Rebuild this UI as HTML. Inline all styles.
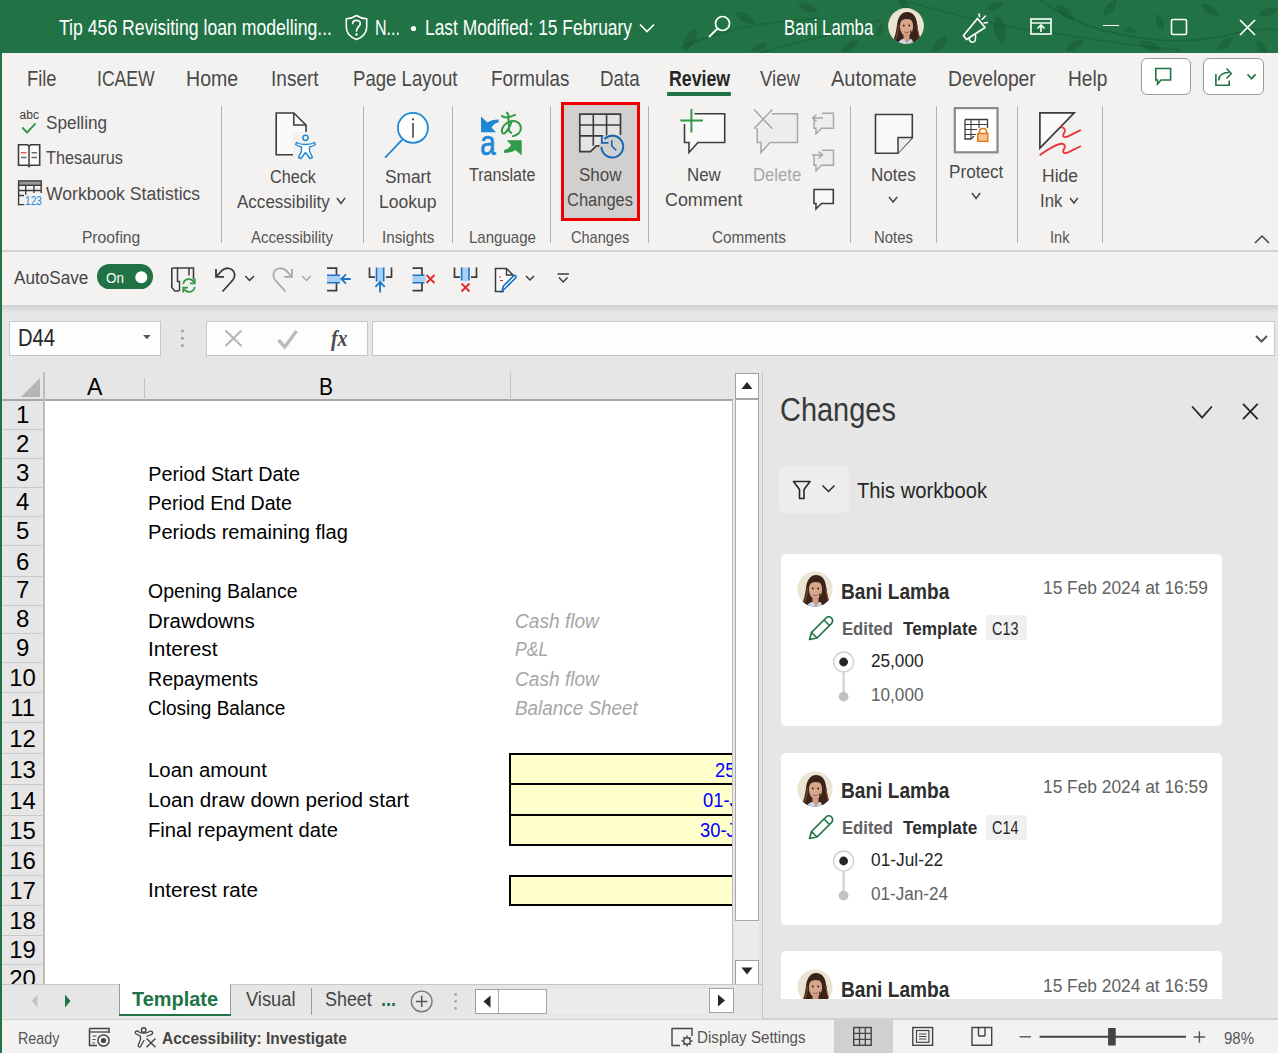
<!DOCTYPE html><html><head><meta charset="utf-8"><style>*{margin:0;padding:0;box-sizing:border-box}
html,body{width:1278px;height:1053px;overflow:hidden;background:#e6e6e6;font-family:"Liberation Sans", sans-serif}
.a{position:absolute;display:block}
.t{white-space:nowrap;transform-origin:0 0}
svg.a{overflow:visible}</style></head><body>
<div class="a" style="left:0px;top:0px;width:1278px;height:53px;background:#217346"></div>
<svg class="a" style="left:0px;top:0px;" width="1278" height="53" viewBox="0 0 1278 53" fill="none"><path d="M680 48 C720 30 760 22 820 18 M900 0 C940 10 990 25 1030 30 S1120 45 1180 50 M1040 0 C1070 20 1100 35 1160 40 S1240 25 1278 30 M760 53 C800 40 840 35 880 20" stroke="#16502f" stroke-width="1.6" fill="none" opacity="0.4"/><path d="M-13.0 0 Q0 -10 13.0 0 Q0 10 -13.0 0 Z" transform="translate(690 40) rotate(-60)" fill="#16502f" opacity="0.38"/><path d="M-11.0 0 Q0 -8 11.0 0 Q0 8 -11.0 0 Z" transform="translate(745 18) rotate(30)" fill="#16502f" opacity="0.38"/><path d="M-9.0 0 Q0 -7 9.0 0 Q0 7 -9.0 0 Z" transform="translate(760 47) rotate(-20)" fill="#16502f" opacity="0.38"/><path d="M-11.0 0 Q0 -8 11.0 0 Q0 8 -11.0 0 Z" transform="translate(808 8) rotate(20)" fill="#16502f" opacity="0.38"/><path d="M-10.0 0 Q0 -8 10.0 0 Q0 8 -10.0 0 Z" transform="translate(850 46) rotate(-35)" fill="#16502f" opacity="0.38"/><path d="M-10.0 0 Q0 -7 10.0 0 Q0 7 -10.0 0 Z" transform="translate(905 6) rotate(45)" fill="#16502f" opacity="0.38"/><path d="M-11.0 0 Q0 -9 11.0 0 Q0 9 -11.0 0 Z" transform="translate(940 44) rotate(-50)" fill="#16502f" opacity="0.38"/><path d="M-15.0 0 Q0 -12 15.0 0 Q0 12 -15.0 0 Z" transform="translate(1000 30) rotate(80)" fill="#16502f" opacity="0.38"/><path d="M-9.0 0 Q0 -7 9.0 0 Q0 7 -9.0 0 Z" transform="translate(995 6) rotate(-20)" fill="#16502f" opacity="0.38"/><path d="M-12.0 0 Q0 -9 12.0 0 Q0 9 -12.0 0 Z" transform="translate(1065 12) rotate(40)" fill="#16502f" opacity="0.38"/><path d="M-11.0 0 Q0 -8 11.0 0 Q0 8 -11.0 0 Z" transform="translate(1075 45) rotate(-30)" fill="#16502f" opacity="0.38"/><path d="M-10.0 0 Q0 -8 10.0 0 Q0 8 -10.0 0 Z" transform="translate(1110 8) rotate(-50)" fill="#16502f" opacity="0.38"/><path d="M-12.0 0 Q0 -9 12.0 0 Q0 9 -12.0 0 Z" transform="translate(1150 46) rotate(20)" fill="#16502f" opacity="0.38"/><path d="M-9.0 0 Q0 -7 9.0 0 Q0 7 -9.0 0 Z" transform="translate(1160 22) rotate(70)" fill="#16502f" opacity="0.38"/><path d="M-11.0 0 Q0 -8 11.0 0 Q0 8 -11.0 0 Z" transform="translate(1210 10) rotate(30)" fill="#16502f" opacity="0.38"/><path d="M-10.0 0 Q0 -8 10.0 0 Q0 8 -10.0 0 Z" transform="translate(1225 44) rotate(-40)" fill="#16502f" opacity="0.38"/><path d="M-11.0 0 Q0 -8 11.0 0 Q0 8 -11.0 0 Z" transform="translate(1268 12) rotate(-20)" fill="#16502f" opacity="0.38"/><path d="M-9.0 0 Q0 -7 9.0 0 Q0 7 -9.0 0 Z" transform="translate(1262 48) rotate(50)" fill="#16502f" opacity="0.38"/><path d="M-7.0 0 Q0 -6 7.0 0 Q0 6 -7.0 0 Z" transform="translate(790 30) rotate(60)" fill="#16502f" opacity="0.38"/><path d="M-7.0 0 Q0 -6 7.0 0 Q0 6 -7.0 0 Z" transform="translate(880 30) rotate(-70)" fill="#16502f" opacity="0.38"/><path d="M-7.0 0 Q0 -6 7.0 0 Q0 6 -7.0 0 Z" transform="translate(1130 30) rotate(10)" fill="#16502f" opacity="0.38"/></svg>
<div class="a" style="left:0px;top:53px;width:1278px;height:1000px;background:#217346"></div>
<div class="a" style="left:2px;top:53px;width:1276px;height:198px;background:#f3f2f1"></div>
<div class="a" style="left:2px;top:250px;width:1276px;height:2px;background:#d4d2d0"></div>
<div class="a" style="left:2px;top:252px;width:1276px;height:53px;background:#f3f2f1"></div>
<div class="a" style="left:2px;top:305px;width:1276px;height:713px;background:#e6e6e6"></div>
<div class="a" style="left:2px;top:305px;width:1276px;height:8px;background:linear-gradient(#cfcfcf,#e6e6e6)"></div>
<div class="a" style="left:9px;top:321px;width:152px;height:35px;background:#fdfdfd;border:1px solid #c6c6c6"></div>
<div class="a" style="left:206px;top:321px;width:162px;height:35px;background:#fdfdfd;border:1px solid #c6c6c6"></div>
<div class="a" style="left:372px;top:321px;width:903px;height:35px;background:#fdfdfd;border:1px solid #c6c6c6"></div>
<div class="a" style="left:44px;top:400px;width:688px;height:584px;background:#fff"></div>
<div class="a" style="left:2px;top:399px;width:731px;height:2px;background:#a6a6a6"></div>
<div class="a" style="left:43px;top:372px;width:1.5px;height:612px;background:#bdbdbd"></div>
<div class="a" style="left:144px;top:378px;width:1px;height:22px;background:#c4c4c4"></div>
<div class="a" style="left:510px;top:372px;width:1px;height:28px;background:#c4c4c4"></div>
<svg class="a" style="left:20px;top:376px;" width="22" height="22" viewBox="0 0 22 22" fill="none"><path d="M20 2 L20 21 L1 21 Z" fill="#b4b4b4"/></svg>
<div class="a" style="left:2px;top:429px;width:42px;height:1px;background:#c8c8c8"></div>
<div class="a" style="left:2px;top:458px;width:42px;height:1px;background:#c8c8c8"></div>
<div class="a" style="left:2px;top:487px;width:42px;height:1px;background:#c8c8c8"></div>
<div class="a" style="left:2px;top:516px;width:42px;height:1px;background:#c8c8c8"></div>
<div class="a" style="left:2px;top:545px;width:42px;height:1px;background:#c8c8c8"></div>
<div class="a" style="left:2px;top:576px;width:42px;height:1px;background:#c8c8c8"></div>
<div class="a" style="left:2px;top:605px;width:42px;height:1px;background:#c8c8c8"></div>
<div class="a" style="left:2px;top:633px;width:42px;height:1px;background:#c8c8c8"></div>
<div class="a" style="left:2px;top:662px;width:42px;height:1px;background:#c8c8c8"></div>
<div class="a" style="left:2px;top:692px;width:42px;height:1px;background:#c8c8c8"></div>
<div class="a" style="left:2px;top:722px;width:42px;height:1px;background:#c8c8c8"></div>
<div class="a" style="left:2px;top:753px;width:42px;height:1px;background:#c8c8c8"></div>
<div class="a" style="left:2px;top:784px;width:42px;height:1px;background:#c8c8c8"></div>
<div class="a" style="left:2px;top:815px;width:42px;height:1px;background:#c8c8c8"></div>
<div class="a" style="left:2px;top:845px;width:42px;height:1px;background:#c8c8c8"></div>
<div class="a" style="left:2px;top:875px;width:42px;height:1px;background:#c8c8c8"></div>
<div class="a" style="left:2px;top:905px;width:42px;height:1px;background:#c8c8c8"></div>
<div class="a" style="left:2px;top:935px;width:42px;height:1px;background:#c8c8c8"></div>
<div class="a" style="left:2px;top:964px;width:42px;height:1px;background:#c8c8c8"></div>
<div class="a" style="left:762px;top:372px;width:1px;height:646px;background:#c6c6c6"></div>
<div class="a" style="left:2px;top:984px;width:760px;height:35px;background:#e6e6e6"></div>
<div class="a" style="left:2px;top:984px;width:760px;height:1px;background:#c6c6c6"></div>
<div class="a" style="left:2px;top:1019px;width:1276px;height:34px;background:#f3f2f1"></div>
<div class="a" style="left:2px;top:1018px;width:1276px;height:1.5px;background:#d2d2d2"></div>
<span class="a t" style="left:58.80px;top:16px;font-size:21.22px;line-height:23px;color:#ffffff;transform:scaleX(0.8315);">Tip 456 Revisiting loan modelling...</span>
<span class="a t" style="left:375.00px;top:16px;font-size:21.22px;line-height:23px;color:#ffffff;transform:scaleX(0.7576);">N...</span>
<svg class="a" style="left:410px;top:25px;" width="7" height="7" viewBox="0 0 7 7" fill="none"><circle cx="3.5" cy="3.5" r="2.6" fill="#fff"/></svg>
<span class="a t" style="left:424.80px;top:16px;font-size:21.22px;line-height:23px;color:#ffffff;transform:scaleX(0.8201);">Last Modified: 15 February</span>
<svg class="a" style="left:344px;top:13px;" width="26" height="28" viewBox="0 0 26 28" fill="none"><path d="M12.5 2.5 C9 4.8 5.5 5.8 2.3 5.8 V14 C2.3 20 6 24 12.5 26.5 C19 24 22.7 20 22.7 14 V5.8 C19.5 5.8 16 4.8 12.5 2.5 Z" stroke="#fff" stroke-width="1.6" stroke-linejoin="round"/><path d="M8.7 10.5 C8.7 6.3 16.3 6.3 16.3 10.5 C16.3 13.5 12.5 14 12.5 18" stroke="#fff" stroke-width="1.7" stroke-linecap="round" fill="none"/><circle cx="12.5" cy="21.5" r="1.2" fill="#fff"/></svg>
<svg class="a" style="left:638px;top:21px;" width="18" height="14" viewBox="0 0 18 14" fill="none"><path d="M2 3.5 L9 10.5 L16 3.5" stroke="#fff" stroke-width="1.7"/></svg>
<svg class="a" style="left:707px;top:14px;" width="26" height="25" viewBox="0 0 26 25" fill="none"><circle cx="15.5" cy="9.5" r="7" stroke="#fff" stroke-width="1.7"/><path d="M10.5 14.5 L2.5 22.5" stroke="#fff" stroke-width="1.8" stroke-linecap="round"/></svg>
<span class="a t" style="left:784.30px;top:16px;font-size:21.22px;line-height:23px;color:#ffffff;transform:scaleX(0.7876);">Bani Lamba</span>
<svg class="a" style="left:955px;top:10px;" width="40" height="35" viewBox="0 0 40 35" fill="none"><path d="M8.5 25.5 L22.5 8.5 L30 17.5 L11.5 29.5 Z" stroke="#fff" stroke-width="1.7" stroke-linejoin="round" fill="none"/><path d="M14.5 27.8 C13.5 31 17 33.5 19.5 31.5 C20.5 30.5 20.8 29 20.5 24.5" stroke="#fff" stroke-width="1.5" fill="none"/><path d="M24.5 6.5 L24 4 M27 9.5 L30.5 6 M29 13 L32.5 12.5" stroke="#fff" stroke-width="1.6" stroke-linecap="round"/></svg>
<svg class="a" style="left:1029px;top:16px;" width="24" height="20" viewBox="0 0 24 20" fill="none"><rect x="2" y="3" width="20" height="15" stroke="#fff" stroke-width="1.6"/><path d="M2 7 H22" stroke="#fff" stroke-width="1.4"/><path d="M12 16 V9.5 M8.5 12.5 L12 9 L15.5 12.5" stroke="#fff" stroke-width="1.6"/></svg>
<div class="a" style="left:1102.5px;top:24.5px;width:16px;height:1.6px;background:#fff"></div>
<svg class="a" style="left:1170px;top:18px;" width="18" height="18" viewBox="0 0 18 18" fill="none"><rect x="1.5" y="1.5" width="15" height="15" rx="1.5" stroke="#fff" stroke-width="1.6"/></svg>
<svg class="a" style="left:1238px;top:18px;" width="19" height="19" viewBox="0 0 19 19" fill="none"><path d="M2 2 L17 17 M17 2 L2 17" stroke="#fff" stroke-width="1.7"/></svg>
<svg class="a" style="left:888px;top:8px;" width="36" height="36" viewBox="0 0 36 36" fill="none"><defs><clipPath id="av0"><circle cx="18" cy="18" r="17.9"/></clipPath></defs>
<g clip-path="url(#av0)"><rect width="36" height="36" fill="#ece4d2"/>
<path d="M4 34 C7 30 8 24 9 17 C10 8 14 4 19 4 C25 4 28 8 29 15 C30 23 31 30 34 35 L34 40 H4 Z" fill="#3a231a"/>
<path d="M7 33 C9 28 10 22 10.5 17 M29 17 C29.5 24 31 29 33 33" stroke="#7a4a2a" stroke-width="1.2" fill="none"/>
<ellipse cx="18.5" cy="18.5" rx="6.6" ry="9.6" fill="#d7a589"/>
<path d="M12 14 C13 8 17 6.5 20 7 C23 8 24.5 10 25 13 C22 10.5 15 10 12 14 Z" fill="#3a231a"/>
<rect x="15.5" y="26" width="6" height="10" fill="#cf9c80"/>
<path d="M9 40 C10 33 13 31 16 31 L19 36 L22 31 C25 31 27 33 28 40 Z" fill="#c9dced"/>
<path d="M23 22 C25 28 26 33 30 36 L26 36 C24 32 22.5 28 22 23 Z" fill="#3a231a"/>
<circle cx="15.8" cy="17.5" r="0.9" fill="#2a1a14"/><circle cx="21.2" cy="17.5" r="0.9" fill="#2a1a14"/>
<path d="M15.8 23.5 C17.5 25 19.5 25 21 23.5" stroke="#b05050" stroke-width="1" fill="none"/></g></svg>
<span class="a t" style="left:27.00px;top:67px;font-size:21.22px;line-height:23px;color:#4a4a4a;transform:scaleX(0.8621);">File</span>
<span class="a t" style="left:97.20px;top:67px;font-size:21.22px;line-height:23px;color:#4a4a4a;transform:scaleX(0.8282);">ICAEW</span>
<span class="a t" style="left:186.10px;top:67px;font-size:21.22px;line-height:23px;color:#4a4a4a;transform:scaleX(0.9222);">Home</span>
<span class="a t" style="left:271.00px;top:67px;font-size:21.22px;line-height:23px;color:#4a4a4a;transform:scaleX(0.8973);">Insert</span>
<span class="a t" style="left:352.80px;top:67px;font-size:21.22px;line-height:23px;color:#4a4a4a;transform:scaleX(0.8762);">Page Layout</span>
<span class="a t" style="left:490.60px;top:67px;font-size:21.22px;line-height:23px;color:#4a4a4a;transform:scaleX(0.8865);">Formulas</span>
<span class="a t" style="left:600.40px;top:67px;font-size:21.22px;line-height:23px;color:#4a4a4a;transform:scaleX(0.8834);">Data</span>
<span class="a t" style="left:759.50px;top:67px;font-size:21.22px;line-height:23px;color:#4a4a4a;transform:scaleX(0.8757);">View</span>
<span class="a t" style="left:830.80px;top:67px;font-size:21.22px;line-height:23px;color:#4a4a4a;transform:scaleX(0.9425);">Automate</span>
<span class="a t" style="left:948.00px;top:67px;font-size:21.22px;line-height:23px;color:#4a4a4a;transform:scaleX(0.9068);">Developer</span>
<span class="a t" style="left:1067.60px;top:67px;font-size:21.22px;line-height:23px;color:#4a4a4a;transform:scaleX(0.9024);">Help</span>
<span class="a t" style="left:668.80px;top:67px;font-size:21.22px;line-height:23px;color:#262626;font-weight:700;transform:scaleX(0.8366);">Review</span>
<div class="a" style="left:667px;top:92px;width:64px;height:4px;background:#217346;border-radius:1px"></div>
<div class="a" style="left:1141px;top:57.5px;width:50px;height:37px;background:#fff;border:1.3px solid #9a9a9a;border-radius:6px"></div>
<svg class="a" style="left:1150px;top:62px;" width="30" height="28" viewBox="0 0 30 28" fill="none"><path d="M5.8 6.5 H20.6 V18 H11 L7.5 22 V18 H5.8 Z" stroke="#217346" stroke-width="1.6" stroke-linejoin="miter" fill="none"/></svg>
<div class="a" style="left:1203px;top:57.5px;width:61px;height:37px;background:#fff;border:1.3px solid #9a9a9a;border-radius:6px"></div>
<svg class="a" style="left:1210px;top:62px;" width="30" height="28" viewBox="0 0 30 28" fill="none"><path d="M5.9 12 V23.2 H19.2 V18.5" stroke="#217346" stroke-width="1.6" fill="none"/><path d="M8.5 18.5 C9 13 13 10.5 19 10.5" stroke="#217346" stroke-width="1.6" fill="none"/><path d="M16.5 6.5 L21.3 11.5 L16.5 16.5" stroke="#217346" stroke-width="1.6" fill="none"/></svg>
<svg class="a" style="left:1245px;top:71px;" width="13" height="11" viewBox="0 0 13 11" fill="none"><path d="M2.5 3.3 L6.5 7.7 L10.6 3.3" stroke="#217346" stroke-width="1.7" fill="none"/></svg>
<div class="a" style="left:220.8px;top:106px;width:1px;height:137px;background:#b4b2b0"></div>
<div class="a" style="left:362.5px;top:106px;width:1px;height:137px;background:#b4b2b0"></div>
<div class="a" style="left:452.0px;top:106px;width:1px;height:137px;background:#b4b2b0"></div>
<div class="a" style="left:550.2px;top:106px;width:1px;height:137px;background:#b4b2b0"></div>
<div class="a" style="left:648.3px;top:106px;width:1px;height:137px;background:#b4b2b0"></div>
<div class="a" style="left:850.3px;top:106px;width:1px;height:137px;background:#b4b2b0"></div>
<div class="a" style="left:936.0px;top:106px;width:1px;height:137px;background:#b4b2b0"></div>
<div class="a" style="left:1017.4px;top:106px;width:1px;height:137px;background:#b4b2b0"></div>
<div class="a" style="left:1101.8px;top:106px;width:1px;height:137px;background:#b4b2b0"></div>
<span class="a t" style="left:45.90px;top:112px;font-size:19.19px;line-height:21px;color:#4a4a4a;transform:scaleX(0.8950);">Spelling</span>
<span class="a t" style="left:46.40px;top:147px;font-size:19.19px;line-height:21px;color:#4a4a4a;transform:scaleX(0.8481);">Thesaurus</span>
<span class="a t" style="left:45.90px;top:183px;font-size:19.19px;line-height:21px;color:#4a4a4a;transform:scaleX(0.9170);">Workbook Statistics</span>
<span class="a t" style="left:81.90px;top:229px;font-size:15.7px;line-height:17px;color:#555555;">Proofing</span>
<span class="a t" style="left:269.50px;top:166px;font-size:19.19px;line-height:21px;color:#4a4a4a;transform:scaleX(0.8430);">Check</span>
<span class="a t" style="left:237.10px;top:191px;font-size:19.19px;line-height:21px;color:#4a4a4a;transform:scaleX(0.8872);">Accessibility</span>
<span class="a t" style="left:251.00px;top:229px;font-size:15.7px;line-height:17px;color:#555555;transform:scaleX(0.9592);">Accessibility</span>
<span class="a t" style="left:385.20px;top:166px;font-size:19.19px;line-height:21px;color:#4a4a4a;transform:scaleX(0.9025);">Smart</span>
<span class="a t" style="left:379.30px;top:191px;font-size:19.19px;line-height:21px;color:#4a4a4a;transform:scaleX(0.9135);">Lookup</span>
<span class="a t" style="left:381.60px;top:229px;font-size:15.7px;line-height:17px;color:#555555;transform:scaleX(0.9700);">Insights</span>
<span class="a t" style="left:469.40px;top:164px;font-size:19.19px;line-height:21px;color:#4a4a4a;transform:scaleX(0.8373);">Translate</span>
<span class="a t" style="left:468.90px;top:229px;font-size:15.7px;line-height:17px;color:#555555;transform:scaleX(0.9576);">Language</span>
<div class="a" style="left:561.2px;top:102px;width:78.6px;height:119.1px;background:#d2d0ce;border:3px solid #ee0000"></div>
<span class="a t" style="left:579.00px;top:164px;font-size:19.19px;line-height:21px;color:#4a4a4a;transform:scaleX(0.8883);">Show</span>
<span class="a t" style="left:566.70px;top:189px;font-size:19.19px;line-height:21px;color:#4a4a4a;transform:scaleX(0.8593);">Changes</span>
<span class="a t" style="left:570.80px;top:229px;font-size:15.7px;line-height:17px;color:#555555;transform:scaleX(0.9278);">Changes</span>
<span class="a t" style="left:687.00px;top:164px;font-size:19.19px;line-height:21px;color:#4a4a4a;transform:scaleX(0.8770);">New</span>
<span class="a t" style="left:664.80px;top:189px;font-size:19.19px;line-height:21px;color:#4a4a4a;transform:scaleX(0.9316);">Comment</span>
<span class="a t" style="left:753.20px;top:164px;font-size:19.19px;line-height:21px;color:#a8a8a8;transform:scaleX(0.8709);">Delete</span>
<span class="a t" style="left:712.10px;top:229px;font-size:15.7px;line-height:17px;color:#555555;transform:scaleX(0.9735);">Comments</span>
<span class="a t" style="left:871.40px;top:164px;font-size:19.19px;line-height:21px;color:#4a4a4a;transform:scaleX(0.8916);">Notes</span>
<span class="a t" style="left:874.00px;top:229px;font-size:15.7px;line-height:17px;color:#555555;transform:scaleX(0.9508);">Notes</span>
<span class="a t" style="left:949.30px;top:161px;font-size:19.19px;line-height:21px;color:#4a4a4a;transform:scaleX(0.8933);">Protect</span>
<span class="a t" style="left:1042.30px;top:165px;font-size:19.19px;line-height:21px;color:#4a4a4a;transform:scaleX(0.9118);">Hide</span>
<span class="a t" style="left:1040.20px;top:190px;font-size:19.19px;line-height:21px;color:#4a4a4a;transform:scaleX(0.8727);">Ink</span>
<span class="a t" style="left:1049.80px;top:229px;font-size:15.7px;line-height:17px;color:#555555;transform:scaleX(0.9286);">Ink</span>
<svg class="a" style="left:335px;top:196px;" width="12" height="9.5" viewBox="0 0 12 9.5" fill="none"><path d="M2 2 L6.0 7.5 L10 2" stroke="#444" stroke-width="1.5"/></svg>
<svg class="a" style="left:887px;top:194.6px;" width="12.200000000000045" height="9.099999999999994" viewBox="0 0 12.200000000000045 9.099999999999994" fill="none"><path d="M2 2 L6.100000000000023 7.099999999999994 L10.200000000000045 2" stroke="#444" stroke-width="1.5"/></svg>
<svg class="a" style="left:969.7px;top:191.2px;" width="12.099999999999909" height="9.5" viewBox="0 0 12.099999999999909 9.5" fill="none"><path d="M2 2 L6.0499999999999545 7.5 L10.099999999999909 2" stroke="#444" stroke-width="1.5"/></svg>
<svg class="a" style="left:1067.7px;top:195.7px;" width="11.799999999999955" height="9.0" viewBox="0 0 11.799999999999955 9.0" fill="none"><path d="M2 2 L5.899999999999977 7.0 L9.799999999999955 2" stroke="#444" stroke-width="1.5"/></svg>
<svg class="a" style="left:1253px;top:233px;" width="18" height="12" viewBox="0 0 18 12" fill="none"><path d="M2 10 L9 3 L16 10" stroke="#444" stroke-width="1.5"/></svg>
<svg class="a" style="left:0px;top:0px;" width="1278" height="260" viewBox="0 0 1278 260" fill="none"><text x="19.5" y="119.4" font-family="Liberation Sans" font-size="12.5" fill="#3c3c3c" textLength="19.5" lengthAdjust="spacingAndGlyphs">abc</text><path d="M22.3 127.5 L27 132.5 L35.6 123.3" stroke="#2f9a48" stroke-width="1.9"/><path d="M18.5 144.8 H27.5 L29 146.3 L30.5 144.8 H39.7 V165.3 H30.3 L29 166.6 L27.7 165.3 H18.5 Z" stroke="#3c3c3c" stroke-width="1.6" fill="#fbfbfb" stroke-linejoin="miter"/><path d="M29 146.3 V165.5" stroke="#3c3c3c" stroke-width="1.5"/><path d="M21 152.8 H26.5" stroke="#e02020" stroke-width="1.6" stroke-dasharray="1.6 0.6"/><path d="M21 157.5 H26.5 M31.5 152.8 H37 M31.5 157.5 H37" stroke="#6a6a6a" stroke-width="1.5"/><rect x="18.6" y="180.9" width="22.6" height="4.4" fill="#9a9a9a" stroke="#3c3c3c" stroke-width="1.4"/><path d="M41.2 185 V193 M18.6 185 V204.6 H24.5 M18.6 195.5 H24 M18.6 190.5 H41.2 M25.7 185 V195 M34 185 V193" stroke="#3c3c3c" stroke-width="1.4" fill="none"/><rect x="24.5" y="194.8" width="18" height="10.6" fill="#f3f2f1"/><text x="25.1" y="204.5" font-family="Liberation Sans" font-size="12.4" fill="#1e88d6" textLength="16.8" lengthAdjust="spacingAndGlyphs">123</text><path d="M276.2 113 H293.8 L306 125 V154.7 H276.2 Z" stroke="#3c3c3c" stroke-width="1.6" fill="#fafafa" stroke-linejoin="miter"/><path d="M293.8 113 V125 H306" stroke="#3c3c3c" stroke-width="1.5" fill="none"/><rect x="293" y="132" width="24" height="27" fill="#f3f2f1"/><circle cx="305.5" cy="137.8" r="2.6" stroke="#1e88d6" stroke-width="1.5" fill="#fff"/><path d="M296.5 142.5 C299 144 302 144.5 305.5 144.5 C309 144.5 312 144 314.5 142.5 L315.3 144.5 C313 146 311 146.6 309.5 147 V151 L312.5 157.5 L310 158.5 L305.5 152.5 L301 158.5 L298.5 157.5 L301.5 151 V147 C300 146.6 298 146 295.7 144.5 Z" stroke="#1e88d6" stroke-width="1.4" fill="#fff" stroke-linejoin="round"/><circle cx="412.9" cy="127.9" r="15" stroke="#1e88d6" stroke-width="1.8" fill="#fff"/><path d="M401.8 140.2 L385.6 157.2" stroke="#1e88d6" stroke-width="1.8" stroke-linecap="round"/><path d="M413 123 V137.8" stroke="#3c3c3c" stroke-width="1.5"/><circle cx="413" cy="119.3" r="1.1" fill="#3c3c3c"/><path d="M481 116.5 V132.3 H496 L491.5 127.5 C493.5 124.5 495.5 123 498.6 122.5 V119.5 C494 119.5 490 120.5 487.5 122.5 Z" fill="#1e88d6"/><text x="480.3" y="155.2" font-family="Liberation Sans" font-size="35" fill="#1e88d6" stroke="#1e88d6" stroke-width="0.7" textLength="15.5" lengthAdjust="spacingAndGlyphs">a</text><path d="M502 116 C503.5 117.5 506 117.8 509 117 C511 116.5 513.5 115.5 515 114.8" stroke="#2f9a48" stroke-width="2" fill="none" stroke-linecap="round"/><path d="M506.8 112.6 C508 113 508.3 114 508.3 115.5 C508.5 121 508.8 127 509.3 131.5 L511.3 132.8" stroke="#2f9a48" stroke-width="2" fill="none" stroke-linecap="round"/><path d="M512 120.8 C510.5 125 508.5 129.5 505.5 132.5 C503.8 134.2 501.8 133.8 501.8 131 C501.8 127 505.5 122.5 511 121.3 C515.5 120.5 520.3 122.3 520.8 127.5 C521.2 132 517.5 135 513 136.2" stroke="#2f9a48" stroke-width="2" fill="none" stroke-linecap="round"/><path d="M521.7 155.3 V140.2 H506.7 L511.2 145 C509.2 148 507.2 149.5 504.1 150 V153 C508.7 153 512.7 152 515.2 150 Z" fill="#2f9a48"/><path d="M579.8 114.1 H620.5 V135 H603 V145.8 H596.3 L590.5 151.7 H579.8 Z" fill="#e4e4e4"/><path d="M620.5 135 V114.1 H579.8 V151.7 H590.5 L596.3 145.8 H601" stroke="#3c3c3c" stroke-width="1.7" fill="none" stroke-linejoin="miter"/><path d="M579.8 125 H620.5 M579.8 135.9 H603 M593.3 114.1 V145.8 M606.6 114.1 V135.9" stroke="#3c3c3c" stroke-width="1.6"/><circle cx="612.2" cy="146.8" r="12.8" fill="#d2d0ce"/><path d="M604.5 139 A10.9 10.9 0 1 1 601.4 146.8" stroke="#1664b4" stroke-width="1.9" fill="none"/><path d="M601.8 136 V142.8 H608.5" stroke="#1664b4" stroke-width="1.8" fill="none"/><path d="M611.8 140.2 V146 L616.3 150.5" stroke="#1664b4" stroke-width="1.6" fill="none"/><path d="M684.5 124 V142.5 H689 V152.5 L698 142.5 H724.7 V113.8 H694.5" stroke="#3c3c3c" stroke-width="1.6" fill="#fafafa" stroke-linejoin="miter"/><path d="M680.4 120.5 H702.9 M691.4 109 V132.5" stroke="#2f9a48" stroke-width="2"/><path d="M757.2 128 V142.5 H761 V152.5 L770 142.5 H797.5 V113.8 H772" stroke="#a6a6a6" stroke-width="1.5" fill="#ededed"/><path d="M754 109.5 L772.4 128.8 M772.4 109.5 L754 128.8" stroke="#a6a6a6" stroke-width="1.5"/><path d="M814 118.3 V128.3 H816 V133.8 L821.5 128.3 H833.5 V113.3 H822" stroke="#a6a6a6" stroke-width="1.4" fill="#ededed"/><path d="M813 118 H823 M816.5 114.5 L812.5 118 L816.5 121.5" stroke="#a6a6a6" stroke-width="1.3"/><path d="M814 155.3 V165.3 H816 V170.8 L821.5 165.3 H833.5 V150.3 H822" stroke="#a6a6a6" stroke-width="1.4" fill="#ededed"/><path d="M812 155 H822 M818.5 151.5 L822.5 155 L818.5 158.5" stroke="#a6a6a6" stroke-width="1.3"/><path d="M814 189.5 H833.3 V203.5 H821.5 L816 208.8 V203.5 H814 Z" stroke="#3c3c3c" stroke-width="1.6" fill="#fafafa" stroke-linejoin="miter"/><path d="M875.5 114.5 H912.3 V137.6 L897.8 153.2 H875.5 Z" stroke="#3c3c3c" stroke-width="1.6" fill="#fafafa" stroke-linejoin="miter"/><path d="M912.3 137.6 H898 V153.2" stroke="#3c3c3c" stroke-width="1.5" fill="#ececec"/><rect x="954.8" y="108.1" width="42.7" height="44.2" stroke="#8a8a8a" stroke-width="2.2" fill="#ffffff"/><path d="M965 119.5 H987.5 V128 M965 119.5 V139 H971 L974 136" stroke="#3c3c3c" stroke-width="1.3" fill="none"/><path d="M965 124.5 H987.5 M965 129.5 H977 M965 134.5 H976 M971 119.5 V139 M979 119.5 V128" stroke="#3c3c3c" stroke-width="1.1"/><path d="M979.5 133 V131.5 C979.5 127.5 986.5 127.5 986.5 131.5 V133" stroke="#e07b13" stroke-width="1.6" fill="none"/><rect x="977.8" y="133.5" width="10" height="7.8" fill="#f7c58f" stroke="#e07b13" stroke-width="1.4"/><path d="M1039.9 112.9 H1074.2 L1039.9 148.2 Z" stroke="#3c3c3c" stroke-width="1.7" fill="#fafafa" stroke-linejoin="miter"/><path d="M1061.3 127.3 C1064 127.5 1065.5 129.5 1064.8 131.5 C1064 133.5 1062.5 135 1063.3 136.3 C1064 137.5 1066 137.2 1068 136.3 L1080.1 130.3" stroke="#e8383d" stroke-width="1.9" fill="none" stroke-linecap="round"/><path d="M1040.3 154.8 C1047 150 1054 145.5 1060 144 C1063.5 143.2 1065.5 145 1064.8 147.2 C1064 149.5 1062.5 151 1063.3 152.2 C1064 153.5 1066 153.2 1068 152.3 L1080.1 146.5" stroke="#e8383d" stroke-width="1.9" fill="none" stroke-linecap="round"/></svg>
<span class="a t" style="left:13.60px;top:267px;font-size:18.75px;line-height:21px;color:#444;transform:scaleX(0.9148);">AutoSave</span>
<div class="a" style="left:96.7px;top:264.4px;width:56.3px;height:24.6px;background:#217346;border-radius:12.3px"></div>
<span class="a t" style="left:106.00px;top:269px;font-size:15.26px;line-height:17px;color:#fff;transform:scaleX(0.8836);">On</span>
<svg class="a" style="left:134px;top:270px;" width="15" height="15" viewBox="0 0 15 15" fill="none"><circle cx="7.3" cy="7.3" r="6" fill="#fff"/></svg>
<svg class="a" style="left:0px;top:0px;" width="1278" height="305" viewBox="0 0 1278 305" fill="none"><path d="M171.8 268 H193.5 V279.5 M171.8 268 V287.5 L174.8 291 H179" stroke="#3c3c3c" stroke-width="1.6" fill="none" stroke-linejoin="miter"/><path d="M177.5 268 V281.5 H179.5 V291 M189 268 V275.5" stroke="#3c3c3c" stroke-width="1.5" fill="none"/><circle cx="189" cy="285.5" r="7.5" fill="#f3f2f1"/><path d="M183.3 284 A5.6 5.6 0 0 1 194 282.5" stroke="#2f9a48" stroke-width="1.8" fill="none"/><path d="M194.8 278.5 V283.3 H190" stroke="#2f9a48" stroke-width="1.7" fill="none"/><path d="M194.7 287 A5.6 5.6 0 0 1 184 288.5" stroke="#2f9a48" stroke-width="1.8" fill="none"/><path d="M183.2 292.5 V287.7 H188" stroke="#2f9a48" stroke-width="1.7" fill="none"/><path d="M216 269 V276.8 H224" stroke="#3c3c3c" stroke-width="1.8" fill="none"/><path d="M216.5 276.3 L222 270.5 C226 266.5 233.5 268 234.5 274 C235 277 233.5 279.5 231.5 281.5 L222.5 291.5" stroke="#3c3c3c" stroke-width="1.8" fill="none"/><path d="M245.3 276 L249.6 280.4 L254 276" stroke="#3c3c3c" stroke-width="1.5" fill="none"/><path d="M292 269 V276.8 H284" stroke="#a8a8a8" stroke-width="1.8" fill="none"/><path d="M291.5 276.3 L286 270.5 C282 266.5 274.5 268 273.5 274 C273 277 274.5 279.5 276.5 281.5 L285.5 291.5" stroke="#a8a8a8" stroke-width="1.8" fill="none"/><path d="M302.2 276 L306.5 280.4 L310.7 276" stroke="#a8a8a8" stroke-width="1.5" fill="none"/><path d="M327.0 268.1 H336.5 V275.1 M327.0 290.6 H336.5 V283.1" stroke="#3c3c3c" stroke-width="1.7" fill="none"/><path d="M327 275.3 H339.5 L341.5 279 L339.5 282.7 H327 Z" fill="#a9d0f2"/><path d="M327 275.3 H340 M327 282.7 H340" stroke="#1b74c9" stroke-width="1.6"/><path d="M341 279 H350.7 M346 274.3 L341.3 279 L346 283.7" stroke="#1b74c9" stroke-width="1.8" fill="none"/><path d="M369.5 267.6 V277.1 H375.0 M391.5 267.6 V277.1 H386.0" stroke="#3c3c3c" stroke-width="1.7" fill="none"/><rect x="376.5" y="267.6" width="7.2" height="14" fill="#a9d0f2"/><path d="M376.5 267.6 V281.5 M383.7 267.6 V281.5" stroke="#1b74c9" stroke-width="1.6"/><path d="M380.1 282 V292.5 M375.4 286.8 L380.1 282 L384.8 286.8" stroke="#1b74c9" stroke-width="1.8" fill="none"/><path d="M412.5 268.1 H422 V275.1 M412.5 290.6 H422 V283.1" stroke="#3c3c3c" stroke-width="1.7" fill="none"/><path d="M412.5 275.3 H424 L426.5 279 L424 282.7 H412.5 Z" fill="#a9d0f2"/><path d="M412.5 275.3 H424.5 M412.5 282.7 H424.5" stroke="#1b74c9" stroke-width="1.6"/><path d="M426.5 275 L434.5 283 M434.5 275 L426.5 283" stroke="#e0282e" stroke-width="1.8"/><path d="M454.5 267.6 V277.1 H460.0 M476.5 267.6 V277.1 H471.0" stroke="#3c3c3c" stroke-width="1.7" fill="none"/><path d="M461.6 267.6 H469 V280 L465.3 282 L461.6 280 Z" fill="#a9d0f2"/><path d="M461.6 267.6 V280.5 M469 267.6 V280.5" stroke="#1b74c9" stroke-width="1.6"/><path d="M461.5 283.5 L469.5 291.5 M469.5 283.5 L461.5 291.5" stroke="#e0282e" stroke-width="1.8"/><path d="M504 291.5 H495.5 V268.5 H506.5 L513 275 V281" stroke="#3c3c3c" stroke-width="1.5" fill="#fafafa"/><path d="M506.5 268.5 V275 H513" stroke="#3c3c3c" stroke-width="1.4" fill="none"/><path d="M499 277 H501 M500 280.5 H503" stroke="#e0282e" stroke-width="1.2"/><path d="M502 291 L503.5 286 L513.5 276 C515 274.5 517 276.5 515.5 278 L505.5 288 Z" stroke="#1e6fc8" stroke-width="1.6" fill="#fff"/><path d="M526 276 L530 280 L534 276" stroke="#3c3c3c" stroke-width="1.5" fill="none"/><path d="M557.6 274 H568.9 M559 277.5 L563.2 282 L567.5 277.5" stroke="#3c3c3c" stroke-width="1.5" fill="none"/></svg>
<span class="a t" style="left:17.50px;top:324px;font-size:23.84px;line-height:27px;color:#262626;transform:scaleX(0.8481);">D44</span>
<svg class="a" style="left:0px;top:300px;" width="1278" height="70" viewBox="0 300 1278 70" fill="none"><path d="M143.1 335 H150.7 L146.9 339.2 Z" fill="#555"/><circle cx="182.4" cy="331" r="1.5" fill="#a0a0a0"/><circle cx="182.4" cy="338.2" r="1.5" fill="#a0a0a0"/><circle cx="182.4" cy="345.4" r="1.5" fill="#a0a0a0"/><path d="M225.5 330.5 L241.5 346 M241.5 330.5 L225.5 346" stroke="#b4b4b4" stroke-width="2"/><path d="M278.5 340 L284.8 347 L296.5 331" stroke="#bcbcbc" stroke-width="3.4" fill="none"/><path d="M1256 336 L1261.5 341.5 L1267 336" stroke="#555" stroke-width="2" fill="none"/></svg>
<span class="a t" style="left:331.00px;top:326px;font-size:22.53px;line-height:25px;color:#4a4a4a;font-weight:700;font-style:italic;transform:scaleX(0.8805);font-family:'Liberation Serif',serif;">fx</span>
<span class="a t" style="left:86.80px;top:373px;font-size:24.42px;line-height:27px;color:#000;transform:scaleX(0.9448);">A</span>
<span class="a t" style="left:319.00px;top:373px;font-size:24.42px;line-height:27px;color:#000;transform:scaleX(0.8589);">B</span>
<span class="a t" style="left:15.94px;top:401px;font-size:23.98px;line-height:27px;color:#000;">1</span>
<span class="a t" style="left:15.94px;top:430px;font-size:23.98px;line-height:27px;color:#000;">2</span>
<span class="a t" style="left:15.94px;top:459px;font-size:23.98px;line-height:27px;color:#000;">3</span>
<span class="a t" style="left:15.94px;top:488px;font-size:23.98px;line-height:27px;color:#000;">4</span>
<span class="a t" style="left:15.94px;top:517px;font-size:23.98px;line-height:27px;color:#000;">5</span>
<span class="a t" style="left:15.94px;top:548px;font-size:23.98px;line-height:27px;color:#000;">6</span>
<span class="a t" style="left:15.94px;top:576px;font-size:23.98px;line-height:27px;color:#000;">7</span>
<span class="a t" style="left:15.94px;top:605px;font-size:23.98px;line-height:27px;color:#000;">8</span>
<span class="a t" style="left:15.94px;top:634px;font-size:23.98px;line-height:27px;color:#000;">9</span>
<span class="a t" style="left:9.26px;top:664px;font-size:23.98px;line-height:27px;color:#000;">10</span>
<span class="a t" style="left:10.16px;top:694px;font-size:23.98px;line-height:27px;color:#000;">11</span>
<span class="a t" style="left:9.26px;top:725px;font-size:23.98px;line-height:27px;color:#000;">12</span>
<span class="a t" style="left:9.26px;top:756px;font-size:23.98px;line-height:27px;color:#000;">13</span>
<span class="a t" style="left:9.26px;top:787px;font-size:23.98px;line-height:27px;color:#000;">14</span>
<span class="a t" style="left:9.26px;top:817px;font-size:23.98px;line-height:27px;color:#000;">15</span>
<span class="a t" style="left:9.26px;top:847px;font-size:23.98px;line-height:27px;color:#000;">16</span>
<span class="a t" style="left:9.26px;top:877px;font-size:23.98px;line-height:27px;color:#000;">17</span>
<span class="a t" style="left:9.26px;top:907px;font-size:23.98px;line-height:27px;color:#000;">18</span>
<span class="a t" style="left:9.26px;top:936px;font-size:23.98px;line-height:27px;color:#000;">19</span>
<span class="a t" style="left:9.26px;top:965px;font-size:23.98px;line-height:27px;color:#000;">20</span>
<span class="a t" style="left:148.30px;top:463px;font-size:19.77px;line-height:22px;color:#000;">Period Start Date</span>
<span class="a t" style="left:148.30px;top:492px;font-size:19.77px;line-height:22px;color:#000;transform:scaleX(0.9927);">Period End Date</span>
<span class="a t" style="left:148.30px;top:521px;font-size:19.77px;line-height:22px;color:#000;transform:scaleX(1.0162);">Periods remaining flag</span>
<span class="a t" style="left:148.30px;top:580px;font-size:19.77px;line-height:22px;color:#000;transform:scaleX(0.9856);">Opening Balance</span>
<span class="a t" style="left:148.30px;top:610px;font-size:19.77px;line-height:22px;color:#000;transform:scaleX(1.0329);">Drawdowns</span>
<span class="a t" style="left:148.30px;top:638px;font-size:19.77px;line-height:22px;color:#000;transform:scaleX(1.0541);">Interest</span>
<span class="a t" style="left:148.30px;top:668px;font-size:19.77px;line-height:22px;color:#000;transform:scaleX(0.9909);">Repayments</span>
<span class="a t" style="left:148.30px;top:697px;font-size:19.77px;line-height:22px;color:#000;transform:scaleX(0.9616);">Closing Balance</span>
<span class="a t" style="left:148.30px;top:759px;font-size:19.77px;line-height:22px;color:#000;transform:scaleX(1.0294);">Loan amount</span>
<span class="a t" style="left:148.30px;top:789px;font-size:19.77px;line-height:22px;color:#000;transform:scaleX(1.0469);">Loan draw down period start</span>
<span class="a t" style="left:148.30px;top:819px;font-size:19.77px;line-height:22px;color:#000;transform:scaleX(1.0229);">Final repayment date</span>
<span class="a t" style="left:148.30px;top:879px;font-size:19.77px;line-height:22px;color:#000;transform:scaleX(1.0429);">Interest rate</span>
<span class="a t" style="left:514.60px;top:610px;font-size:19.77px;line-height:22px;color:#a6a6a6;font-style:italic;transform:scaleX(0.9661);">Cash flow</span>
<span class="a t" style="left:514.60px;top:638px;font-size:19.77px;line-height:22px;color:#a6a6a6;font-style:italic;transform:scaleX(0.8912);">P&amp;L</span>
<span class="a t" style="left:514.60px;top:668px;font-size:19.77px;line-height:22px;color:#a6a6a6;font-style:italic;transform:scaleX(0.9661);">Cash flow</span>
<span class="a t" style="left:514.60px;top:697px;font-size:19.77px;line-height:22px;color:#a6a6a6;font-style:italic;transform:scaleX(0.9544);">Balance Sheet</span>
<div class="a" style="left:509px;top:752.8px;width:224px;height:93px;background:#ffffcc;border:2px solid #000;border-right:none"></div>
<div class="a" style="left:509px;top:783.3px;width:224px;height:2px;background:#000"></div>
<div class="a" style="left:509px;top:814.1px;width:224px;height:2px;background:#000"></div>
<div class="a" style="left:509px;top:874.6px;width:224px;height:31.8px;background:#ffffcc;border:2px solid #000;border-right:none"></div>
<div class="a" style="left:690px;top:755px;width:42px;height:150px;overflow:hidden">
<span class="a t" style="left:24.70px;top:4px;font-size:19.77px;line-height:22px;color:#0000ff;transform:scaleX(0.93)">25,000</span>
<span class="a t" style="left:13.20px;top:34px;font-size:19.77px;line-height:22px;color:#0000ff;transform:scaleX(0.93)">01-Jul-22</span>
<span class="a t" style="left:9.80px;top:64px;font-size:19.77px;line-height:22px;color:#0000ff;transform:scaleX(0.93)">30-Jun-24</span>
<span class="a t" style="left:40.50px;top:124px;font-size:19.77px;line-height:22px;color:#0000ff;transform:scaleX(0.93)">5.00%</span>
</div>
<div class="a" style="left:731.5px;top:400px;width:1.5px;height:584px;background:#bdbdbd"></div>
<div class="a" style="left:734.5px;top:372.5px;width:24.5px;height:26.5px;background:#fff;border:1px solid #a0a0a0"></div>
<svg class="a" style="left:740px;top:379px;" width="14" height="12" viewBox="0 0 14 12" fill="none"><path d="M1.5 10 L7 3 L12.5 10 Z" fill="#262626"/></svg>
<div class="a" style="left:734.5px;top:399px;width:24.5px;height:522px;background:#fff;border:1px solid #a8a8a8"></div>
<div class="a" style="left:735px;top:921px;width:23.5px;height:39px;background:#ebebeb"></div>
<div class="a" style="left:734.5px;top:960px;width:24.5px;height:25px;background:#fff;border:1px solid #a0a0a0"></div>
<svg class="a" style="left:740px;top:965px;" width="14" height="12" viewBox="0 0 14 12" fill="none"><path d="M1.5 2.5 L7 9.5 L12.5 2.5 Z" fill="#262626"/></svg>
<span class="a t" style="left:780.00px;top:392px;font-size:32.56px;line-height:36px;color:#383838;transform:scaleX(0.8893);">Changes</span>
<svg class="a" style="left:1188px;top:402px;" width="28" height="20" viewBox="0 0 28 20" fill="none"><path d="M4.1 4.5 L14.1 15.6 L23.9 4.5" stroke="#262626" stroke-width="1.8" fill="none"/></svg>
<svg class="a" style="left:1240px;top:401px;" width="21" height="21" viewBox="0 0 21 21" fill="none"><path d="M3 2.8 L17.7 18.1 M17.7 2.8 L3 18.1" stroke="#262626" stroke-width="1.8" fill="none"/></svg>
<div class="a" style="left:779.3px;top:465.9px;width:70.2px;height:46.8px;background:#ededed;border-radius:6px"></div>
<svg class="a" style="left:790px;top:478px;" width="48" height="24" viewBox="0 0 48 24" fill="none"><path d="M3.5 3.5 H20 L14 11.5 V20.5 H9.5 V11.5 Z" stroke="#262626" stroke-width="1.6" fill="none" stroke-linejoin="round"/><path d="M32.5 7.5 L38.5 13.5 L44.5 7.5" stroke="#262626" stroke-width="1.5" fill="none"/></svg>
<span class="a t" style="left:857.30px;top:478px;font-size:22.24px;line-height:25px;color:#262626;transform:scaleX(0.9076);">This workbook</span>
<div class="a" style="left:781.1px;top:553.5px;width:441.4px;height:172.2px;background:#fff;border-radius:5px"></div>
<svg class="a" style="left:796.7px;top:571.2px;" width="36" height="36" viewBox="0 0 36 36" fill="none"><defs><clipPath id="av1"><circle cx="18" cy="18" r="17.6"/></clipPath></defs>
<g clip-path="url(#av1)"><rect width="36" height="36" fill="#ece4d2"/>
<path d="M4 34 C7 30 8 24 9 17 C10 8 14 4 19 4 C25 4 28 8 29 15 C30 23 31 30 34 35 L34 40 H4 Z" fill="#3a231a"/>
<path d="M7 33 C9 28 10 22 10.5 17 M29 17 C29.5 24 31 29 33 33" stroke="#7a4a2a" stroke-width="1.2" fill="none"/>
<ellipse cx="18.5" cy="18.5" rx="6.6" ry="9.6" fill="#d7a589"/>
<path d="M12 14 C13 8 17 6.5 20 7 C23 8 24.5 10 25 13 C22 10.5 15 10 12 14 Z" fill="#3a231a"/>
<rect x="15.5" y="26" width="6" height="10" fill="#cf9c80"/>
<path d="M9 40 C10 33 13 31 16 31 L19 36 L22 31 C25 31 27 33 28 40 Z" fill="#c9dced"/>
<path d="M23 22 C25 28 26 33 30 36 L26 36 C24 32 22.5 28 22 23 Z" fill="#3a231a"/>
<circle cx="15.8" cy="17.5" r="0.9" fill="#2a1a14"/><circle cx="21.2" cy="17.5" r="0.9" fill="#2a1a14"/>
<path d="M15.8 23.5 C17.5 25 19.5 25 21 23.5" stroke="#b05050" stroke-width="1" fill="none"/></g></svg>
<span class="a t" style="left:840.50px;top:578px;font-size:22.67px;line-height:26px;color:#2e2e2e;font-weight:700;transform:scaleX(0.8434);">Bani Lamba</span>
<span class="a t" style="left:1042.60px;top:577px;font-size:19.19px;line-height:21px;color:#616161;transform:scaleX(0.9033);">15 Feb 2024 at 16:59</span>
<svg class="a" style="left:806px;top:613.0px;" width="30" height="30" viewBox="0 0 30 30" fill="none"><path d="M3.5 26.5 L5.5 19.5 L20 5 C21.5 3.5 24 3.5 25.5 5 C27 6.5 27 9 25.5 10.5 L11 25 Z" stroke="#217346" stroke-width="1.7" fill="none" stroke-linejoin="round"/><path d="M18 7 L23.5 12.5 M5.5 19.5 L10.8 24.8" stroke="#217346" stroke-width="1.5"/></svg>
<span class="a t" style="left:842.10px;top:618px;font-size:19.19px;line-height:21px;color:#616161;font-weight:700;transform:scaleX(0.8682);">Edited</span>
<span class="a t" style="left:903.20px;top:618px;font-size:19.19px;line-height:21px;color:#2e2e2e;font-weight:700;transform:scaleX(0.8961);">Template</span>
<div class="a" style="left:986.2px;top:615.2px;width:40.7px;height:25px;background:#f0f0f0;border-radius:3px"></div>
<span class="a t" style="left:992.30px;top:618px;font-size:19.19px;line-height:21px;color:#262626;transform:scaleX(0.7497);">C13</span>
<svg class="a" style="left:830px;top:649.0px;" width="28" height="56" viewBox="0 0 28 56" fill="none"><circle cx="13.6" cy="13" r="10" stroke="#d0d0d0" stroke-width="1.4" fill="#fff"/><circle cx="13.6" cy="13" r="4.4" fill="#262626"/><path d="M13.6 24 V46" stroke="#d0d0d0" stroke-width="2.2"/><circle cx="13.6" cy="47.6" r="4.9" fill="#c2c2c2"/></svg>
<span class="a t" style="left:870.60px;top:650px;font-size:19.19px;line-height:21px;color:#262626;transform:scaleX(0.8948);">25,000</span>
<span class="a t" style="left:870.60px;top:684px;font-size:19.19px;line-height:21px;color:#616161;transform:scaleX(0.8948);">10,000</span>
<div class="a" style="left:781.1px;top:752.8px;width:441.4px;height:172.2px;background:#fff;border-radius:5px"></div>
<svg class="a" style="left:796.7px;top:770.5px;" width="36" height="36" viewBox="0 0 36 36" fill="none"><defs><clipPath id="av2"><circle cx="18" cy="18" r="17.6"/></clipPath></defs>
<g clip-path="url(#av2)"><rect width="36" height="36" fill="#ece4d2"/>
<path d="M4 34 C7 30 8 24 9 17 C10 8 14 4 19 4 C25 4 28 8 29 15 C30 23 31 30 34 35 L34 40 H4 Z" fill="#3a231a"/>
<path d="M7 33 C9 28 10 22 10.5 17 M29 17 C29.5 24 31 29 33 33" stroke="#7a4a2a" stroke-width="1.2" fill="none"/>
<ellipse cx="18.5" cy="18.5" rx="6.6" ry="9.6" fill="#d7a589"/>
<path d="M12 14 C13 8 17 6.5 20 7 C23 8 24.5 10 25 13 C22 10.5 15 10 12 14 Z" fill="#3a231a"/>
<rect x="15.5" y="26" width="6" height="10" fill="#cf9c80"/>
<path d="M9 40 C10 33 13 31 16 31 L19 36 L22 31 C25 31 27 33 28 40 Z" fill="#c9dced"/>
<path d="M23 22 C25 28 26 33 30 36 L26 36 C24 32 22.5 28 22 23 Z" fill="#3a231a"/>
<circle cx="15.8" cy="17.5" r="0.9" fill="#2a1a14"/><circle cx="21.2" cy="17.5" r="0.9" fill="#2a1a14"/>
<path d="M15.8 23.5 C17.5 25 19.5 25 21 23.5" stroke="#b05050" stroke-width="1" fill="none"/></g></svg>
<span class="a t" style="left:840.50px;top:777px;font-size:22.67px;line-height:26px;color:#2e2e2e;font-weight:700;transform:scaleX(0.8434);">Bani Lamba</span>
<span class="a t" style="left:1042.60px;top:776px;font-size:19.19px;line-height:21px;color:#616161;transform:scaleX(0.9033);">15 Feb 2024 at 16:59</span>
<svg class="a" style="left:806px;top:812.3px;" width="30" height="30" viewBox="0 0 30 30" fill="none"><path d="M3.5 26.5 L5.5 19.5 L20 5 C21.5 3.5 24 3.5 25.5 5 C27 6.5 27 9 25.5 10.5 L11 25 Z" stroke="#217346" stroke-width="1.7" fill="none" stroke-linejoin="round"/><path d="M18 7 L23.5 12.5 M5.5 19.5 L10.8 24.8" stroke="#217346" stroke-width="1.5"/></svg>
<span class="a t" style="left:842.10px;top:817px;font-size:19.19px;line-height:21px;color:#616161;font-weight:700;transform:scaleX(0.8682);">Edited</span>
<span class="a t" style="left:903.20px;top:817px;font-size:19.19px;line-height:21px;color:#2e2e2e;font-weight:700;transform:scaleX(0.8961);">Template</span>
<div class="a" style="left:986.2px;top:814.5px;width:40.7px;height:25px;background:#f0f0f0;border-radius:3px"></div>
<span class="a t" style="left:992.30px;top:817px;font-size:19.19px;line-height:21px;color:#262626;transform:scaleX(0.7497);">C14</span>
<svg class="a" style="left:830px;top:848.3px;" width="28" height="56" viewBox="0 0 28 56" fill="none"><circle cx="13.6" cy="13" r="10" stroke="#d0d0d0" stroke-width="1.4" fill="#fff"/><circle cx="13.6" cy="13" r="4.4" fill="#262626"/><path d="M13.6 24 V46" stroke="#d0d0d0" stroke-width="2.2"/><circle cx="13.6" cy="47.6" r="4.9" fill="#c2c2c2"/></svg>
<span class="a t" style="left:870.60px;top:849px;font-size:19.19px;line-height:21px;color:#262626;transform:scaleX(0.9022);">01-Jul-22</span>
<span class="a t" style="left:870.60px;top:883px;font-size:19.19px;line-height:21px;color:#616161;transform:scaleX(0.8912);">01-Jan-24</span>
<div class="a" style="left:0;top:0;width:1278px;height:999.2px;overflow:hidden">
<div class="a" style="left:781.1px;top:951.3px;width:441.4px;height:47.90000000000009px;overflow:hidden">
<div class="a" style="left:0;top:0;width:441.4px;height:172.2px;background:#fff;border-radius:5px"></div>
</div>
<svg class="a" style="left:796.7px;top:969.0px;" width="36" height="36" viewBox="0 0 36 36" fill="none"><defs><clipPath id="av3"><circle cx="18" cy="18" r="17.6"/></clipPath></defs>
<g clip-path="url(#av3)"><rect width="36" height="36" fill="#ece4d2"/>
<path d="M4 34 C7 30 8 24 9 17 C10 8 14 4 19 4 C25 4 28 8 29 15 C30 23 31 30 34 35 L34 40 H4 Z" fill="#3a231a"/>
<path d="M7 33 C9 28 10 22 10.5 17 M29 17 C29.5 24 31 29 33 33" stroke="#7a4a2a" stroke-width="1.2" fill="none"/>
<ellipse cx="18.5" cy="18.5" rx="6.6" ry="9.6" fill="#d7a589"/>
<path d="M12 14 C13 8 17 6.5 20 7 C23 8 24.5 10 25 13 C22 10.5 15 10 12 14 Z" fill="#3a231a"/>
<rect x="15.5" y="26" width="6" height="10" fill="#cf9c80"/>
<path d="M9 40 C10 33 13 31 16 31 L19 36 L22 31 C25 31 27 33 28 40 Z" fill="#c9dced"/>
<path d="M23 22 C25 28 26 33 30 36 L26 36 C24 32 22.5 28 22 23 Z" fill="#3a231a"/>
<circle cx="15.8" cy="17.5" r="0.9" fill="#2a1a14"/><circle cx="21.2" cy="17.5" r="0.9" fill="#2a1a14"/>
<path d="M15.8 23.5 C17.5 25 19.5 25 21 23.5" stroke="#b05050" stroke-width="1" fill="none"/></g></svg>
<span class="a t" style="left:840.50px;top:976px;font-size:22.67px;line-height:26px;color:#2e2e2e;font-weight:700;transform:scaleX(0.8434);">Bani Lamba</span>
<span class="a t" style="left:1042.60px;top:975px;font-size:19.19px;line-height:21px;color:#616161;transform:scaleX(0.9033);">15 Feb 2024 at 16:59</span>
</div>
<div class="a" style="left:2px;top:984px;width:760px;height:35px;background:#e6e6e6"></div>
<div class="a" style="left:2px;top:984px;width:760px;height:1px;background:#c6c6c6"></div>
<svg class="a" style="left:0px;top:980px;" width="780" height="40" viewBox="0 980 780 40" fill="none"><path d="M37.5 994.5 L32 1001 L37.5 1007.5 Z" fill="#c2c2c2"/><path d="M65 994.5 L70.5 1001 L65 1007.5 Z" fill="#217346"/></svg>
<div class="a" style="left:118.9px;top:984px;width:112.6px;height:32px;background:#fff;border-left:1px solid #9a9a9a;border-right:1px solid #9a9a9a"></div>
<div class="a" style="left:118.9px;top:1013.6px;width:112.6px;height:2.6px;background:#217346"></div>
<span class="a t" style="left:132.00px;top:989px;font-size:19.33px;line-height:21px;color:#217346;font-weight:700;transform:scaleX(1.0311);">Template</span>
<span class="a t" style="left:245.90px;top:989px;font-size:19.33px;line-height:21px;color:#444;transform:scaleX(0.9467);">Visual</span>
<div class="a" style="left:311.1px;top:988px;width:1px;height:26.6px;background:#9a9a9a"></div>
<span class="a t" style="left:325.40px;top:989px;font-size:19.33px;line-height:21px;color:#444;transform:scaleX(0.9267);">Sheet</span>
<span class="a t" style="left:381.00px;top:989px;font-size:19.33px;line-height:21px;color:#217346;font-weight:700;transform:scaleX(0.9321);">...</span>
<svg class="a" style="left:0px;top:980px;" width="780" height="40" viewBox="0 980 780 40" fill="none"><circle cx="421.7" cy="1001.4" r="10.3" stroke="#7a7a7a" stroke-width="1.4" fill="none"/><path d="M416 1001.4 H427.4 M421.7 995.7 V1007.1" stroke="#555" stroke-width="1.5"/><circle cx="455.6" cy="994.5" r="1.4" fill="#a8a8a8"/><circle cx="455.6" cy="1001.4" r="1.4" fill="#a8a8a8"/><circle cx="455.6" cy="1008.3" r="1.4" fill="#a8a8a8"/></svg>
<div class="a" style="left:474.6px;top:988.5px;width:24px;height:25.2px;background:#fff;border:1px solid #a0a0a0"></div>
<svg class="a" style="left:474.6px;top:988.5px;" width="24" height="25" viewBox="0 0 24 25" fill="none"><path d="M15.5 6.5 L8.5 12.6 L15.5 18.7 Z" fill="#262626"/></svg>
<div class="a" style="left:498px;top:988.5px;width:49.2px;height:25.2px;background:#fff;border:1px solid #a8a8a8"></div>
<div class="a" style="left:547px;top:989px;width:162.5px;height:24.5px;background:#ebebeb"></div>
<div class="a" style="left:709.4px;top:988.4px;width:24.3px;height:25px;background:#fff;border:1px solid #a0a0a0"></div>
<svg class="a" style="left:709.4px;top:988.4px;" width="24" height="25" viewBox="0 0 24 25" fill="none"><path d="M9 6.5 L16 12.5 L9 18.5 Z" fill="#262626"/></svg>
<span class="a t" style="left:18.30px;top:1029px;font-size:16.42px;line-height:18px;color:#555;transform:scaleX(0.8724);">Ready</span>
<svg class="a" style="left:0px;top:1015px;" width="1278" height="38" viewBox="0 1015 1278 38" fill="none"><path d="M89.5 1028.5 H109 V1033 M89.5 1028.5 V1045.5 H97" stroke="#444" stroke-width="1.5" fill="none"/><path d="M89.5 1032 H109" stroke="#444" stroke-width="1.3"/><path d="M92.5 1036 H96.5 M92.5 1039.5 H95.5 M92.5 1043 H95" stroke="#444" stroke-width="1.2"/><circle cx="103.5" cy="1040.5" r="5.6" stroke="#444" stroke-width="1.5" fill="none"/><circle cx="103.5" cy="1040.5" r="2.6" fill="#444"/><circle cx="143.7" cy="1030" r="2.3" stroke="#444" stroke-width="1.4" fill="none"/><path d="M135.6 1031.5 C137 1030.5 138 1031 139 1032 C141 1033.5 146 1033.5 148.5 1032 C150 1031 151.5 1030.5 152.5 1032 C153.3 1033.3 152 1034.3 150.5 1035 C149 1035.7 147.5 1036.2 146.5 1036.5 M140.5 1036 C139.3 1035.5 137.5 1034.8 136.3 1034 C135.3 1033.3 135 1032.3 135.6 1031.5 M140.5 1036 V1039.5 L138.3 1045 C137.8 1046.5 139.5 1047.8 140.6 1046.5 L143 1042 L144.3 1040" stroke="#444" stroke-width="1.3" fill="none" stroke-linejoin="round"/><path d="M146.5 1038.5 L155.5 1047.3 M155.5 1038.5 L146.5 1047.3" stroke="#444" stroke-width="1.4"/><path d="M680 1045.5 H672 V1028.5 H692 V1036" stroke="#444" stroke-width="1.4" fill="none"/><circle cx="687" cy="1041" r="3.2" stroke="#444" stroke-width="1.4" fill="none"/><path d="M687 1035.5 V1037 M687 1045 V1046.5 M681.5 1041 H683 M691 1041 H692.5 M683.2 1037.2 L684.3 1038.3 M689.7 1043.7 L690.8 1044.8 M683.2 1044.8 L684.3 1043.7 M689.7 1038.3 L690.8 1037.2" stroke="#444" stroke-width="1.4"/></svg>
<span class="a t" style="left:162.00px;top:1029px;font-size:16.42px;line-height:18px;color:#444;font-weight:700;transform:scaleX(0.9428);">Accessibility: Investigate</span>
<span class="a t" style="left:697.20px;top:1028px;font-size:16.42px;line-height:18px;color:#555;transform:scaleX(0.9233);">Display Settings</span>
<div class="a" style="left:834px;top:1019.7px;width:59.2px;height:33.3px;background:#d2d0ce"></div>
<svg class="a" style="left:0px;top:1015px;" width="1278" height="38" viewBox="0 1015 1278 38" fill="none"><rect x="853.7" y="1027.5" width="17.5" height="17.8" stroke="#444" stroke-width="1.4" fill="none"/><path d="M859.5 1027.5 V1045.3 M865.3 1027.5 V1045.3 M853.7 1033.4 H871.2 M853.7 1039.3 H871.2" stroke="#444" stroke-width="1.3"/><rect x="912.8" y="1027.5" width="19.8" height="17.8" stroke="#444" stroke-width="1.4" fill="none"/><rect x="916.5" y="1030.5" width="12.4" height="11.8" stroke="#444" stroke-width="1.2" fill="none"/><path d="M919 1034 H926.5 M919 1036.5 H926.5 M919 1039 H926.5" stroke="#444" stroke-width="1"/><path d="M972 1027.5 H991.7 V1045.3 H972 Z M978.5 1027.5 V1036 M985 1027.5 V1036 M978.5 1036 H985" stroke="#444" stroke-width="1.4" fill="none"/><path d="M1019.6 1036.8 H1030.9" stroke="#555" stroke-width="1.4"/><path d="M1039.6 1036.8 H1186" stroke="#444" stroke-width="2"/><rect x="1108.1" y="1028" width="7.6" height="17.5" fill="#444"/><path d="M1193.6 1037 H1205.1 M1199.4 1031.3 V1042.8" stroke="#555" stroke-width="1.4"/></svg>
<span class="a t" style="left:1224.00px;top:1029px;font-size:16.42px;line-height:18px;color:#555;transform:scaleX(0.9154);">98%</span>
</body></html>
